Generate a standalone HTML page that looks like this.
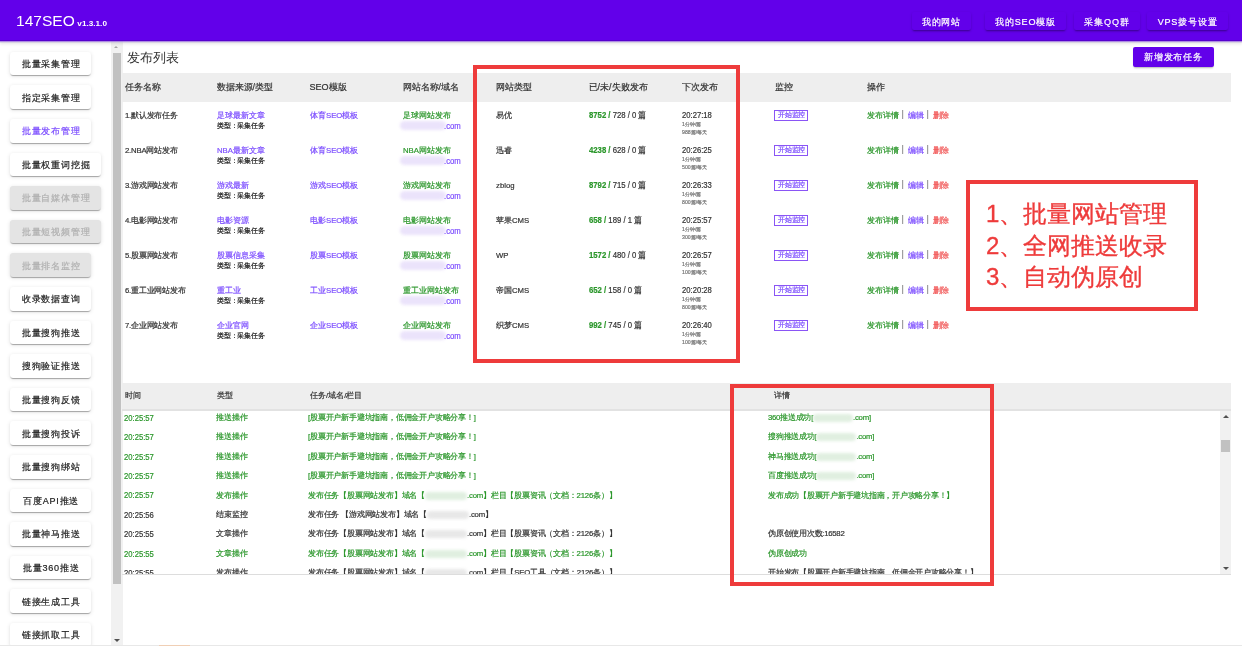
<!DOCTYPE html><html><head><meta charset="utf-8"><style>
*{margin:0;padding:0;box-sizing:border-box}
html,body{width:1242px;height:646px;overflow:hidden;background:#fff;font-family:"Liberation Sans",sans-serif;color:#333}
.a{position:absolute;white-space:nowrap}
#w *{-webkit-text-stroke-width:.2px}
#w .big,#w .big *{-webkit-text-stroke-width:0}
.hdr{position:absolute;left:0;top:0;width:1242px;height:41px;background:#6200ea;box-shadow:inset 0 -1px 0 rgba(0,0,0,.12),0 1px 0 rgba(140,80,230,.55),0 2px 0 rgba(200,190,220,.5),0 3px 3px rgba(0,0,0,.1);z-index:5}
.logo{position:absolute;left:16px;top:12px;font-size:14.8px;color:#fff;line-height:18px;transform:scaleX(1.05);transform-origin:0 0}
.logo small{font-size:7.8px;font-weight:bold;margin-left:2.5px}
.nb{position:absolute;top:12px;height:18px;background:#6200ea;color:#fff;font-size:9.06px;line-height:18px;padding-top:1px;text-align:center;letter-spacing:.8px;border-radius:2px;box-shadow:0 2px 2px -1px rgba(0,0,0,.3),0 1px 3px rgba(0,0,0,.15)}
.sb{position:absolute;left:10px;height:23.5px;background:#fff;color:#222;font-size:9.06px;line-height:23px;padding-top:1.3px;padding-left:1.4px;text-align:center;letter-spacing:.8px;border-radius:3px;box-shadow:0 2px 1px -1px rgba(0,0,0,.2),0 1px 1px 0 rgba(0,0,0,.14),0 1px 4px 0 rgba(0,0,0,.12)}
.sb.dis{background:#e4e4e4;color:#b0b0b0}
.sb.act{color:#7c4dff}
.th{position:absolute;font-size:9.06px;color:#333;white-space:nowrap}
.td{position:absolute;font-size:7.76px;color:#333;white-space:nowrap;line-height:10px}
.sub{position:absolute;font-size:6.8px;letter-spacing:-.2px;color:#222;white-space:nowrap;line-height:8px}
.tiny{position:absolute;font-size:5.2px;color:#777;white-space:nowrap;line-height:6px}
.lk{color:#7c4dff}
.gr{color:#2a962a}
.rd{color:#f04a4a}
.blur{display:inline-block;height:8px;border-radius:4px;vertical-align:middle;filter:blur(1.5px)}
.mon{position:absolute;font-size:6.5px;letter-spacing:-.1px;line-height:8.5px;height:10.7px;width:33.8px;padding:0 0 0 2.6px;border:1px solid #8a55f5;color:#7c4dff;white-space:nowrap}
.rbox{position:absolute;border:4px solid #ee3b3b}
</style></head><body><div id="w" style="position:absolute;left:0;top:0;width:1242px;height:646px;overflow:hidden;will-change:transform"><div class="hdr"><div class="logo big">147SEO<small>v1.3.1.0</small></div><div class="nb" style="left:912px;width:59px">我的网站</div><div class="nb" style="left:985px;width:81px">我的SEO模版</div><div class="nb" style="left:1074px;width:66px">采集QQ群</div><div class="nb" style="left:1147px;width:81px">VPS拨号设置</div></div><div class="sb " style="top:51.8px;width:81px">批量采集管理</div><div class="sb " style="top:85.4px;width:81px">指定采集管理</div><div class="sb act" style="top:119.0px;width:81px">批量发布管理</div><div class="sb " style="top:152.6px;width:91px">批量权重词挖掘</div><div class="sb dis" style="top:186.2px;width:91px">批量自媒体管理</div><div class="sb dis" style="top:219.8px;width:91px">批量短视频管理</div><div class="sb dis" style="top:253.4px;width:81px">批量排名监控</div><div class="sb " style="top:287.0px;width:81px">收录数据查询</div><div class="sb " style="top:320.6px;width:81px">批量搜狗推送</div><div class="sb " style="top:354.2px;width:81px">搜狗验证推送</div><div class="sb " style="top:387.8px;width:81px">批量搜狗反馈</div><div class="sb " style="top:421.4px;width:81px">批量搜狗投诉</div><div class="sb " style="top:455.0px;width:81px">批量搜狗绑站</div><div class="sb " style="top:488.6px;width:81px">百度API推送</div><div class="sb " style="top:522.2px;width:81px">批量神马推送</div><div class="sb " style="top:555.8px;width:81px">批量360推送</div><div class="sb " style="top:589.4px;width:81px">链接生成工具</div><div class="sb " style="top:623.0px;width:81px">链接抓取工具</div><div class="a" style="left:111px;top:41px;width:11.5px;height:605px;background:#f1f1f1"></div><div class="a" style="left:112.5px;top:53px;width:8.5px;height:531px;background:#c1c1c1"></div><div class="a" style="left:113.8px;top:45.8px;width:0;height:0;border-left:2.8px solid transparent;border-right:2.8px solid transparent;border-bottom:2.8px solid #a3a3a3"></div><div class="a" style="left:113.5px;top:638.5px;width:0;height:0;border-left:3px solid transparent;border-right:3px solid transparent;border-top:3px solid #505050"></div><div class="a big" style="left:126.5px;top:49px;font-size:13.3px;line-height:17px;color:#333">发布列表</div><div class="a" style="left:1133px;top:47px;width:81px;height:20px;background:#6200ea;color:#fff;font-size:9.06px;line-height:20px;text-align:center;letter-spacing:.95px;border-radius:2px;box-shadow:0 2px 2px -1px rgba(0,0,0,.3)">新增发布任务</div><div class="a" style="left:122px;top:72.7px;width:1109px;height:29px;background:#eee"></div><div class="th" style="left:124.5px;top:81.8px;line-height:11px">任务名称</div><div class="th" style="left:216.5px;top:81.8px;line-height:11px">数据来源/类型</div><div class="th" style="left:309.5px;top:81.8px;line-height:11px">SEO模版</div><div class="th" style="left:402.5px;top:81.8px;line-height:11px">网站名称/域名</div><div class="th" style="left:495.5px;top:81.8px;line-height:11px">网站类型</div><div class="th" style="left:588.5px;top:81.8px;line-height:11px">已/未/失败发布</div><div class="th" style="left:681.5px;top:81.8px;line-height:11px">下次发布</div><div class="th" style="left:774.5px;top:81.8px;line-height:11px">监控</div><div class="th" style="left:866.5px;top:81.8px;line-height:11px">操作</div><div class="td" style="left:125px;top:110.7px;letter-spacing:-.2px">1.默认发布任务</div><div class="td lk" style="left:217px;top:110.7px">足球最新文章</div><div class="sub" style="left:217px;top:121.5px">类型：采集任务</div><div class="td lk" style="left:310px;top:110.7px">体育SEO模板</div><div class="td gr" style="left:403px;top:110.7px">足球网站发布</div><div class="a" style="left:400px;top:120.5px;width:46px;height:9px;border-radius:5px;background:#ebe3fb;filter:blur(1.5px)"></div><div class="td lk" style="left:444px;top:121px;font-size:8.6px;transform:scaleX(.9);transform-origin:0 0">.com</div><div class="td" style="left:496px;top:110.7px">易优</div><div class="td" style="left:588.6px;top:110.4px;font-size:8.6px;transform:scaleX(.9);transform-origin:0 0"><b class="gr">8752 /</b> 728 / 0 篇</div><div class="td" style="left:682px;top:109.6px;font-size:8.6px;transform:scaleX(.89);transform-origin:0 0">20:27:18</div><div class="tiny" style="left:682px;top:121px">1分钟/篇</div><div class="tiny" style="left:682px;top:129px">988篇/每天</div><div class="mon" style="left:774.2px;top:110px">开始监控</div><div class="td" style="left:867px;top:110.7px"><span class="gr">发布详情</span><span style="margin:0 4px 0 2.6px;color:#888;font-size:9px;line-height:0;position:relative;top:-.3px">|</span><span class="lk">编辑</span><span style="margin:0 4.6px 0 2.6px;color:#888;font-size:9px;line-height:0;position:relative;top:-.3px">|</span><span class="rd">删除</span></div><div class="td" style="left:125px;top:145.7px;letter-spacing:-.2px">2.NBA网站发布</div><div class="td lk" style="left:217px;top:145.7px">NBA最新文章</div><div class="sub" style="left:217px;top:156.5px">类型：采集任务</div><div class="td lk" style="left:310px;top:145.7px">体育SEO模板</div><div class="td gr" style="left:403px;top:145.7px">NBA网站发布</div><div class="a" style="left:400px;top:155.5px;width:46px;height:9px;border-radius:5px;background:#ebe3fb;filter:blur(1.5px)"></div><div class="td lk" style="left:444px;top:156px;font-size:8.6px;transform:scaleX(.9);transform-origin:0 0">.com</div><div class="td" style="left:496px;top:145.7px">迅睿</div><div class="td" style="left:588.6px;top:145.39999999999998px;font-size:8.6px;transform:scaleX(.9);transform-origin:0 0"><b class="gr">4238 /</b> 628 / 0 篇</div><div class="td" style="left:682px;top:144.6px;font-size:8.6px;transform:scaleX(.89);transform-origin:0 0">20:26:25</div><div class="tiny" style="left:682px;top:156px">1分钟/篇</div><div class="tiny" style="left:682px;top:164px">500篇/每天</div><div class="mon" style="left:774.2px;top:145px">开始监控</div><div class="td" style="left:867px;top:145.7px"><span class="gr">发布详情</span><span style="margin:0 4px 0 2.6px;color:#888;font-size:9px;line-height:0;position:relative;top:-.3px">|</span><span class="lk">编辑</span><span style="margin:0 4.6px 0 2.6px;color:#888;font-size:9px;line-height:0;position:relative;top:-.3px">|</span><span class="rd">删除</span></div><div class="td" style="left:125px;top:180.7px;letter-spacing:-.2px">3.游戏网站发布</div><div class="td lk" style="left:217px;top:180.7px">游戏最新</div><div class="sub" style="left:217px;top:191.5px">类型：采集任务</div><div class="td lk" style="left:310px;top:180.7px">游戏SEO模板</div><div class="td gr" style="left:403px;top:180.7px">游戏网站发布</div><div class="a" style="left:400px;top:190.5px;width:46px;height:9px;border-radius:5px;background:#ebe3fb;filter:blur(1.5px)"></div><div class="td lk" style="left:444px;top:191px;font-size:8.6px;transform:scaleX(.9);transform-origin:0 0">.com</div><div class="td" style="left:496px;top:180.7px">zblog</div><div class="td" style="left:588.6px;top:180.39999999999998px;font-size:8.6px;transform:scaleX(.9);transform-origin:0 0"><b class="gr">8792 /</b> 715 / 0 篇</div><div class="td" style="left:682px;top:179.6px;font-size:8.6px;transform:scaleX(.89);transform-origin:0 0">20:26:33</div><div class="tiny" style="left:682px;top:191px">1分钟/篇</div><div class="tiny" style="left:682px;top:199px">800篇/每天</div><div class="mon" style="left:774.2px;top:180px">开始监控</div><div class="td" style="left:867px;top:180.7px"><span class="gr">发布详情</span><span style="margin:0 4px 0 2.6px;color:#888;font-size:9px;line-height:0;position:relative;top:-.3px">|</span><span class="lk">编辑</span><span style="margin:0 4.6px 0 2.6px;color:#888;font-size:9px;line-height:0;position:relative;top:-.3px">|</span><span class="rd">删除</span></div><div class="td" style="left:125px;top:215.7px;letter-spacing:-.2px">4.电影网站发布</div><div class="td lk" style="left:217px;top:215.7px">电影资源</div><div class="sub" style="left:217px;top:226.5px">类型：采集任务</div><div class="td lk" style="left:310px;top:215.7px">电影SEO模板</div><div class="td gr" style="left:403px;top:215.7px">电影网站发布</div><div class="a" style="left:400px;top:225.5px;width:46px;height:9px;border-radius:5px;background:#ebe3fb;filter:blur(1.5px)"></div><div class="td lk" style="left:444px;top:226px;font-size:8.6px;transform:scaleX(.9);transform-origin:0 0">.com</div><div class="td" style="left:496px;top:215.7px">苹果CMS</div><div class="td" style="left:588.6px;top:215.39999999999998px;font-size:8.6px;transform:scaleX(.9);transform-origin:0 0"><b class="gr">658 /</b> 189 / 1 篇</div><div class="td" style="left:682px;top:214.6px;font-size:8.6px;transform:scaleX(.89);transform-origin:0 0">20:25:57</div><div class="tiny" style="left:682px;top:226px">1分钟/篇</div><div class="tiny" style="left:682px;top:234px">300篇/每天</div><div class="mon" style="left:774.2px;top:215px">开始监控</div><div class="td" style="left:867px;top:215.7px"><span class="gr">发布详情</span><span style="margin:0 4px 0 2.6px;color:#888;font-size:9px;line-height:0;position:relative;top:-.3px">|</span><span class="lk">编辑</span><span style="margin:0 4.6px 0 2.6px;color:#888;font-size:9px;line-height:0;position:relative;top:-.3px">|</span><span class="rd">删除</span></div><div class="td" style="left:125px;top:250.7px;letter-spacing:-.2px">5.股票网站发布</div><div class="td lk" style="left:217px;top:250.7px">股票信息采集</div><div class="sub" style="left:217px;top:261.5px">类型：采集任务</div><div class="td lk" style="left:310px;top:250.7px">股票SEO模板</div><div class="td gr" style="left:403px;top:250.7px">股票网站发布</div><div class="a" style="left:400px;top:260.5px;width:46px;height:9px;border-radius:5px;background:#ebe3fb;filter:blur(1.5px)"></div><div class="td lk" style="left:444px;top:261px;font-size:8.6px;transform:scaleX(.9);transform-origin:0 0">.com</div><div class="td" style="left:496px;top:250.7px">WP</div><div class="td" style="left:588.6px;top:250.39999999999998px;font-size:8.6px;transform:scaleX(.9);transform-origin:0 0"><b class="gr">1572 /</b> 480 / 0 篇</div><div class="td" style="left:682px;top:249.6px;font-size:8.6px;transform:scaleX(.89);transform-origin:0 0">20:26:57</div><div class="tiny" style="left:682px;top:261px">1分钟/篇</div><div class="tiny" style="left:682px;top:269px">100篇/每天</div><div class="mon" style="left:774.2px;top:250px">开始监控</div><div class="td" style="left:867px;top:250.7px"><span class="gr">发布详情</span><span style="margin:0 4px 0 2.6px;color:#888;font-size:9px;line-height:0;position:relative;top:-.3px">|</span><span class="lk">编辑</span><span style="margin:0 4.6px 0 2.6px;color:#888;font-size:9px;line-height:0;position:relative;top:-.3px">|</span><span class="rd">删除</span></div><div class="td" style="left:125px;top:285.7px;letter-spacing:-.2px">6.重工业网站发布</div><div class="td lk" style="left:217px;top:285.7px">重工业</div><div class="sub" style="left:217px;top:296.5px">类型：采集任务</div><div class="td lk" style="left:310px;top:285.7px">工业SEO模板</div><div class="td gr" style="left:403px;top:285.7px">重工业网站发布</div><div class="a" style="left:400px;top:295.5px;width:46px;height:9px;border-radius:5px;background:#ebe3fb;filter:blur(1.5px)"></div><div class="td lk" style="left:444px;top:296px;font-size:8.6px;transform:scaleX(.9);transform-origin:0 0">.com</div><div class="td" style="left:496px;top:285.7px">帝国CMS</div><div class="td" style="left:588.6px;top:285.4px;font-size:8.6px;transform:scaleX(.9);transform-origin:0 0"><b class="gr">652 /</b> 158 / 0 篇</div><div class="td" style="left:682px;top:284.6px;font-size:8.6px;transform:scaleX(.89);transform-origin:0 0">20:20:28</div><div class="tiny" style="left:682px;top:296px">1分钟/篇</div><div class="tiny" style="left:682px;top:304px">800篇/每天</div><div class="mon" style="left:774.2px;top:285px">开始监控</div><div class="td" style="left:867px;top:285.7px"><span class="gr">发布详情</span><span style="margin:0 4px 0 2.6px;color:#888;font-size:9px;line-height:0;position:relative;top:-.3px">|</span><span class="lk">编辑</span><span style="margin:0 4.6px 0 2.6px;color:#888;font-size:9px;line-height:0;position:relative;top:-.3px">|</span><span class="rd">删除</span></div><div class="td" style="left:125px;top:320.7px;letter-spacing:-.2px">7.企业网站发布</div><div class="td lk" style="left:217px;top:320.7px">企业官网</div><div class="sub" style="left:217px;top:331.5px">类型：采集任务</div><div class="td lk" style="left:310px;top:320.7px">企业SEO模板</div><div class="td gr" style="left:403px;top:320.7px">企业网站发布</div><div class="a" style="left:400px;top:330.5px;width:46px;height:9px;border-radius:5px;background:#ebe3fb;filter:blur(1.5px)"></div><div class="td lk" style="left:444px;top:331px;font-size:8.6px;transform:scaleX(.9);transform-origin:0 0">.com</div><div class="td" style="left:496px;top:320.7px">织梦CMS</div><div class="td" style="left:588.6px;top:320.4px;font-size:8.6px;transform:scaleX(.9);transform-origin:0 0"><b class="gr">992 /</b> 745 / 0 篇</div><div class="td" style="left:682px;top:319.6px;font-size:8.6px;transform:scaleX(.89);transform-origin:0 0">20:26:40</div><div class="tiny" style="left:682px;top:331px">1分钟/篇</div><div class="tiny" style="left:682px;top:339px">100篇/每天</div><div class="mon" style="left:774.2px;top:320px">开始监控</div><div class="td" style="left:867px;top:320.7px"><span class="gr">发布详情</span><span style="margin:0 4px 0 2.6px;color:#888;font-size:9px;line-height:0;position:relative;top:-.3px">|</span><span class="lk">编辑</span><span style="margin:0 4.6px 0 2.6px;color:#888;font-size:9px;line-height:0;position:relative;top:-.3px">|</span><span class="rd">删除</span></div><div class="rbox" style="left:473px;top:65px;width:267px;height:298px"></div><div class="rbox" style="left:966px;top:180px;width:232px;height:131px"></div><div class="a" style="left:986px;top:198.0px;font-size:24px;line-height:31.7px;color:#ee3b3b;-webkit-text-stroke-width:.35px">1、批量网站管理</div><div class="a" style="left:986px;top:229.7px;font-size:24px;line-height:31.7px;color:#ee3b3b;-webkit-text-stroke-width:.35px">2、全网推送收录</div><div class="a" style="left:986px;top:261.4px;font-size:24px;line-height:31.7px;color:#ee3b3b;-webkit-text-stroke-width:.35px">3、自动伪原创</div><div class="a" style="left:122px;top:382.5px;width:1109px;height:28.5px;background:#eee;border-bottom:2px solid #e2e2e2"></div><div class="td" style="left:125px;top:391px">时间</div><div class="td" style="left:217px;top:391px">类型</div><div class="td" style="left:310px;top:391px">任务/域名/栏目</div><div class="td" style="left:774px;top:391px">详情</div><div class="a" style="left:122px;top:411px;width:1098px;height:163px;overflow:hidden"><div class="td gr" style="left:2.4px;top:1.6px;font-size:8.6px;transform:scaleX(.89);transform-origin:0 0">20:25:57</div><div class="td gr" style="left:93.5px;top:1.8px">推送操作</div><div class="td gr" style="left:186px;top:1.8px;letter-spacing:-.2px">[股票开户新手避坑指南，低佣金开户攻略分享！]</div><div class="td gr" style="left:646px;top:1.8px;letter-spacing:-.25px">360推送成功[<span class="blur" style="width:40px;background:#e0efe0"></span>.com]</div><div class="td gr" style="left:2.4px;top:21.0px;font-size:8.6px;transform:scaleX(.89);transform-origin:0 0">20:25:57</div><div class="td gr" style="left:93.5px;top:21.2px">推送操作</div><div class="td gr" style="left:186px;top:21.2px;letter-spacing:-.2px">[股票开户新手避坑指南，低佣金开户攻略分享！]</div><div class="td gr" style="left:646px;top:21.2px;letter-spacing:-.25px">搜狗推送成功[<span class="blur" style="width:40px;background:#e0efe0"></span>.com]</div><div class="td gr" style="left:2.4px;top:40.5px;font-size:8.6px;transform:scaleX(.89);transform-origin:0 0">20:25:57</div><div class="td gr" style="left:93.5px;top:40.7px">推送操作</div><div class="td gr" style="left:186px;top:40.7px;letter-spacing:-.2px">[股票开户新手避坑指南，低佣金开户攻略分享！]</div><div class="td gr" style="left:646px;top:40.7px;letter-spacing:-.25px">神马推送成功[<span class="blur" style="width:40px;background:#e0efe0"></span>.com]</div><div class="td gr" style="left:2.4px;top:59.9px;font-size:8.6px;transform:scaleX(.89);transform-origin:0 0">20:25:57</div><div class="td gr" style="left:93.5px;top:60.1px">推送操作</div><div class="td gr" style="left:186px;top:60.1px;letter-spacing:-.2px">[股票开户新手避坑指南，低佣金开户攻略分享！]</div><div class="td gr" style="left:646px;top:60.1px;letter-spacing:-.25px">百度推送成功[<span class="blur" style="width:40px;background:#e0efe0"></span>.com]</div><div class="td gr" style="left:2.4px;top:79.4px;font-size:8.6px;transform:scaleX(.89);transform-origin:0 0">20:25:57</div><div class="td gr" style="left:93.5px;top:79.6px">发布操作</div><div class="td gr" style="left:186px;top:79.6px;letter-spacing:-.2px">发布任务【股票网站发布】域名【<span class="blur" style="width:42px;background:#e0efe0"></span>.com】栏目【股票资讯（文档：2126条）】</div><div class="td gr" style="left:646px;top:79.6px;letter-spacing:-.25px">发布成功【股票开户新手避坑指南，开户攻略分享！】</div><div class="td " style="left:2.4px;top:98.8px;font-size:8.6px;transform:scaleX(.89);transform-origin:0 0">20:25:56</div><div class="td " style="left:93.5px;top:99.0px">结束监控</div><div class="td " style="left:186px;top:99.0px;letter-spacing:-.2px">发布任务 【游戏网站发布】域名【<span class="blur" style="width:42px;background:#e8e8e8"></span>.com】</div><div class="td " style="left:646px;top:99.0px;letter-spacing:-.25px"></div><div class="td " style="left:2.4px;top:118.2px;font-size:8.6px;transform:scaleX(.89);transform-origin:0 0">20:25:55</div><div class="td " style="left:93.5px;top:118.4px">文章操作</div><div class="td " style="left:186px;top:118.4px;letter-spacing:-.2px">发布任务【股票网站发布】域名【<span class="blur" style="width:42px;background:#e8e8e8"></span>.com】栏目【股票资讯（文档：2126条）】</div><div class="td " style="left:646px;top:118.4px;letter-spacing:-.25px">伪原创使用次数:16582</div><div class="td gr" style="left:2.4px;top:137.7px;font-size:8.6px;transform:scaleX(.89);transform-origin:0 0">20:25:55</div><div class="td gr" style="left:93.5px;top:137.9px">文章操作</div><div class="td gr" style="left:186px;top:137.9px;letter-spacing:-.2px">发布任务【股票网站发布】域名【<span class="blur" style="width:42px;background:#e0efe0"></span>.com】栏目【股票资讯（文档：2126条）】</div><div class="td gr" style="left:646px;top:137.9px;letter-spacing:-.25px">伪原创成功</div><div class="td " style="left:2.4px;top:157.1px;font-size:8.6px;transform:scaleX(.89);transform-origin:0 0">20:25:55</div><div class="td " style="left:93.5px;top:157.3px">发布操作</div><div class="td " style="left:186px;top:157.3px;letter-spacing:-.2px">发布任务【股票网站发布】域名【<span class="blur" style="width:42px;background:#e8e8e8"></span>.com】栏目【SEO工具（文档：2126条）】</div><div class="td " style="left:646px;top:157.3px;letter-spacing:-.25px">开始发布【股票开户新手避坑指南，低佣金开户攻略分享！】</div></div><div class="a" style="left:122px;top:574px;width:1109px;height:1px;background:#ddd"></div><div class="a" style="left:1220px;top:411px;width:11px;height:163px;background:#f1f1f1"></div><div class="a" style="left:1221px;top:440px;width:9px;height:12px;background:#c1c1c1"></div><div class="a" style="left:1222.5px;top:414.8px;width:0;height:0;border-left:3px solid transparent;border-right:3px solid transparent;border-bottom:3px solid #505050"></div><div class="a" style="left:1222.5px;top:567px;width:0;height:0;border-left:3px solid transparent;border-right:3px solid transparent;border-top:3px solid #505050"></div><div class="rbox" style="left:729.5px;top:384px;width:264px;height:202px"></div><div class="a" style="left:0;top:645px;width:1242px;height:1px;background:#e8e8e8"></div><div class="a" style="left:159px;top:645px;width:31px;height:1px;background:#f0cfb5"></div></div></body></html>
